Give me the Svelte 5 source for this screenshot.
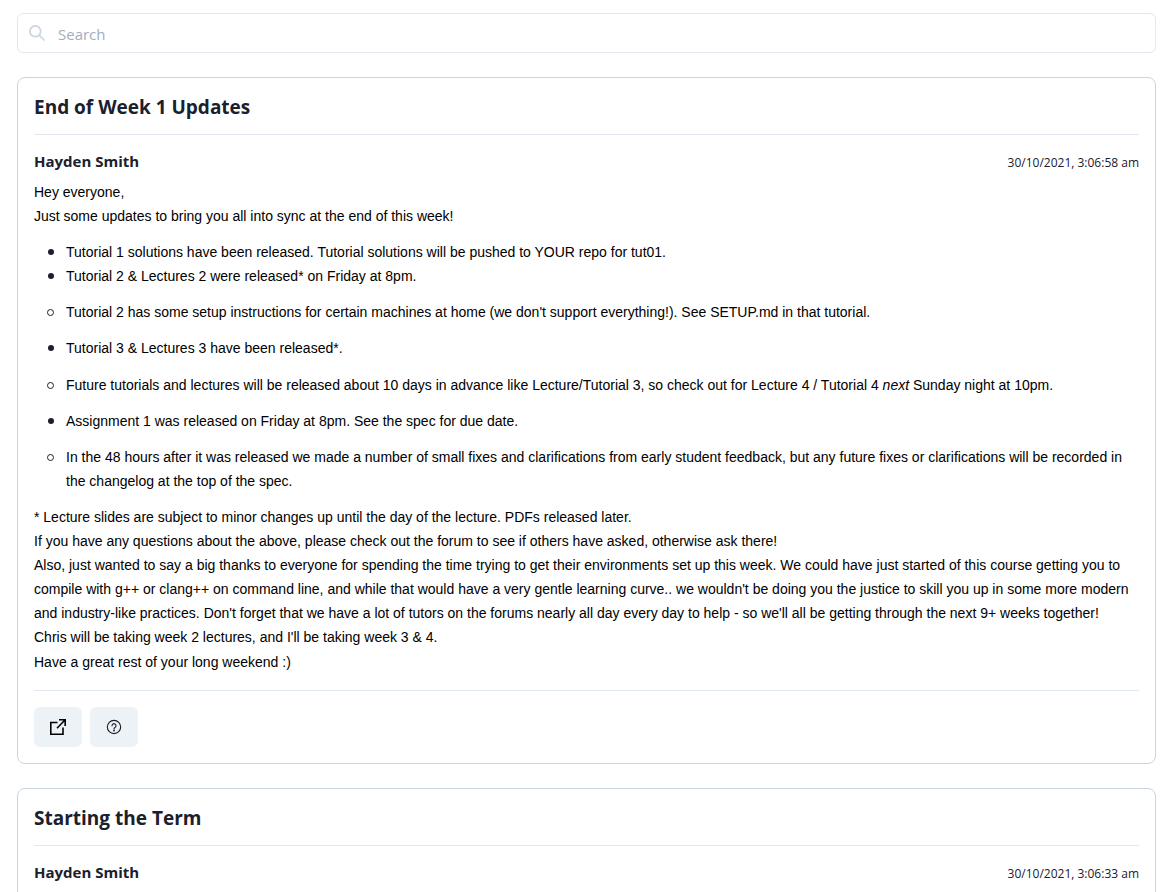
<script>
  const paragraphsBefore = ['Hey everyone,', 'Just some updates to bring you all into sync at the end of this week!'];
  const paragraphsAfter = [
    '* Lecture slides are subject to minor changes up until the day of the lecture. PDFs released later.',
    'If you have any questions about the above, please check out the forum to see if others have asked, otherwise ask there!',
    "Also, just wanted to say a big thanks to everyone for spending the time trying to get their environments set up this week. We could have just started of this course getting you to compile with g++ or clang++ on command line, and while that would have a very gentle learning curve.. we wouldn't be doing you the justice to skill you up in some more modern and industry-like practices. Don't forget that we have a lot of tutors on the forums nearly all day every day to help - so we'll all be getting through the next 9+ weeks together!",
    "Chris will be taking week 2 lectures, and I'll be taking week 3 & 4.",
    'Have a great rest of your long weekend :)'
  ];
</script>

{#snippet heading(title, author, date)}
  <h2>{title}</h2>
  <hr />
  <div class="meta">
    <h3>{author}</h3>
    <time>{date}</time>
  </div>
{/snippet}

<main>
  <label class="search">
    <svg viewBox="0 0 24 24" width="16" height="16" aria-hidden="true">
      <path fill="currentColor" d="M23.384,21.619,16.855,15.09a9.284,9.284,0,1,0-1.768,1.768l6.529,6.529a1.266,1.266,0,0,0,1.768,0A1.251,1.251,0,0,0,23.384,21.619ZM2.75,9.5a6.75,6.75,0,1,1,6.75,6.75A6.758,6.758,0,0,1,2.75,9.5Z" />
    </svg>
    <input type="text" placeholder="Search" aria-label="Search" />
  </label>

  <article>
    {@render heading('End of Week 1 Updates', 'Hayden Smith', '30/10/2021, 3:06:58 am')}
    <div class="body">
      {#each paragraphsBefore as text}<p>{text}</p>{/each}
      <ul>
        <li>Tutorial 1 solutions have been released. Tutorial solutions will be pushed to YOUR repo for tut01.</li>
        <li>Tutorial 2 &amp; Lectures 2 were released* on Friday at 8pm.</li>
      </ul>
      <ul class="sub">
        <li>Tutorial 2 has some setup instructions for certain machines at home (we don't support everything!). See SETUP.md in that tutorial.</li>
      </ul>
      <ul><li>Tutorial 3 &amp; Lectures 3 have been released*.</li></ul>
      <ul class="sub">
        <li>Future tutorials and lectures will be released about 10 days in advance like Lecture/Tutorial 3, so check out for Lecture 4 / Tutorial 4 <em>next</em> Sunday night at 10pm.</li>
      </ul>
      <ul><li>Assignment 1 was released on Friday at 8pm. See the spec for due date.</li></ul>
      <ul class="sub">
        <li>In the 48 hours after it was released we made a number of small fixes and clarifications from early student feedback, but any future fixes or clarifications will be recorded in the changelog at the top of the spec.</li>
      </ul>
      {#each paragraphsAfter as text}<p>{text}</p>{/each}
    </div>
    <hr />
    <div class="actions">
      <button type="button" aria-label="Open in new tab">
        <svg viewBox="0 0 20 20" width="20" height="20" fill="none" stroke="#000" stroke-width="1.6" aria-hidden="true">
          <path d="M11 2.8h6.2V9M17.2 2.8 9 11.2M9.5 5.5H2.8v11.7H15V10.5" />
        </svg>
      </button>
      <button type="button" aria-label="Help">
        <svg viewBox="0 0 24 24" width="16" height="16" fill="none" stroke="currentColor" stroke-width="1.7" stroke-linecap="round" aria-hidden="true">
          <circle cx="12" cy="12" r="10" />
          <path d="M9 10a3 3 0 1 1 4.5 2.6Q12 13.4 12 14.5" />
          <circle cx="12" cy="17.2" r=".6" fill="currentColor" />
        </svg>
      </button>
    </div>
  </article>

  <article>
    {@render heading('Starting the Term', 'Hayden Smith', '30/10/2021, 3:06:33 am')}
  </article>
</main>

<style>
  :global(body) {
    margin: 0;
    background: #fff;
    color: #1a202c;
    font-family: 'Open Sans', 'Noto Sans', sans-serif;
  }
  main {
    display: flex;
    flex-direction: column;
    gap: 24px;
    padding: 13px 15px 24px 17px;
  }
  .search {
    display: flex;
    align-items: center;
    gap: 13px;
    height: 38px;
    padding: 0 11px;
    border: 1px solid #e2e8f0;
    border-radius: 6px;
    color: #cbd5e0;
  }
  input {
    flex: 1;
    min-width: 0;
    padding: 2px 0 0;
    border: 0;
    outline: 0;
    background: none;
    color: #1a202c;
    font: 15px/24px 'Open Sans', sans-serif;
  }
  input::placeholder {
    color: #a0aec0;
    opacity: 1;
  }
  article {
    padding: 16px;
    border: 1px solid #cbd5e0;
    border-radius: 8px;
  }
  h2,
  h3,
  p {
    margin: 0;
  }
  h2 {
    margin-bottom: -2px;
    font-size: 19px;
    line-height: 26px;
    font-weight: 700;
  }
  hr {
    margin: 16px 0;
    border: 0;
    border-top: 1px solid #e2e8f0;
  }
  .meta {
    display: flex;
    align-items: center;
    justify-content: space-between;
    height: 20px;
    margin-bottom: 9px;
  }
  h3 {
    font-size: 15px;
    line-height: 20px;
    font-weight: 700;
  }
  time {
    font-size: 12px;
    line-height: 22px;
  }
  .meta {
    align-items: baseline;
  }
  .body {
    color: #000;
    font: 14px/1.722 'Liberation Sans', Arial, sans-serif;
  }
  ul {
    margin: 12px 0;
    padding-left: 32px;
    list-style: none;
  }
  li {
    position: relative;
  }
  li::before {
    content: '';
    position: absolute;
    top: 9px;
    left: -18px;
    box-sizing: border-box;
    width: 6px;
    height: 6px;
    border-radius: 50%;
    background: #1a202c;
  }
  .sub li::before {
    left: -19px;
    width: 7px;
    height: 7px;
    border: 1px solid #1a202c;
    background: none;
  }
  .actions {
    display: flex;
    gap: 8px;
  }
  button {
    display: grid;
    place-items: center;
    width: 48px;
    height: 40px;
    padding: 0;
    border: 0;
    border-radius: 6px;
    background: #edf2f7;
    color: #1a202c;
  }
</style>
